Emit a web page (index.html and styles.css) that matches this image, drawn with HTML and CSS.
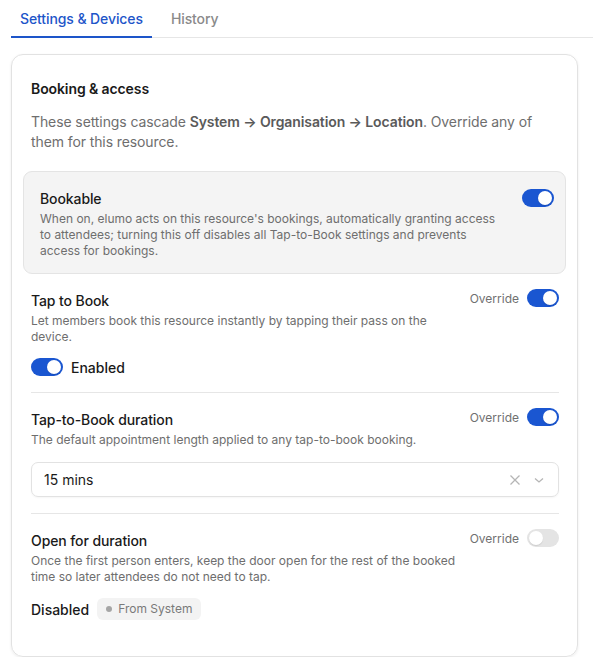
FILE: index.html
```html
<!DOCTYPE html>
<html lang="en">
<head>
<meta charset="UTF-8">
<meta name="viewport" content="width=device-width, initial-scale=1.0">
<title>Resource settings</title>
<link rel="stylesheet" href="styles.css">
</head>
<body>
<div class="tabs">
    <div class="tab active">Settings &amp; Devices</div>
    <div class="tab">History</div>
</div>

<div class="card">
    <h2 class="card-title">Booking &amp; access</h2>
    <p class="card-intro">These settings cascade <b>System → Organisation → Location</b>. Override any of them for this resource.</p>

    <div class="bookable">
        <div class="setting-head">
            <div>
                <div class="setting-title">Bookable</div>
                <p class="setting-desc">When on, elumo acts on this resource's bookings, automatically granting access to attendees; turning this off disables all Tap-to-Book settings and prevents access for bookings.</p>
            </div>
            <span class="toggle on"></span>
        </div>
    </div>

    <div class="setting">
        <div class="setting-head">
            <div>
                <div class="setting-title">Tap to Book</div>
                <p class="setting-desc">Let members book this resource instantly by tapping their pass on the device.</p>
            </div>
            <div class="override">Override <span class="toggle on"></span></div>
        </div>
        <div class="value-row">
            <span class="toggle on"></span>
            <span class="value">Enabled</span>
        </div>
    </div>

    <div class="setting">
        <div class="setting-head">
            <div>
                <div class="setting-title">Tap-to-Book duration</div>
                <p class="setting-desc">The default appointment length applied to any tap-to-book booking.</p>
            </div>
            <div class="override">Override <span class="toggle on"></span></div>
        </div>
        <div class="select">
            <span>15 mins</span>
            <div class="select-icons">
                <svg width="14" height="14" viewBox="0 0 14 14"><path d="M2.5 2.5l9 9M11.5 2.5l-9 9" stroke="#b5b5b5" stroke-width="1.3" fill="none"/></svg>
                <svg width="14" height="14" viewBox="0 0 14 14"><path d="M3 5.5l4 3.5 4-3.5" stroke="#b5b5b5" stroke-width="1.3" fill="none"/></svg>
            </div>
        </div>
    </div>

    <div class="setting">
        <div class="setting-head">
            <div>
                <div class="setting-title">Open for duration</div>
                <p class="setting-desc">Once the first person enters, keep the door open for the rest of the booked time so later attendees do not need to tap.</p>
            </div>
            <div class="override">Override <span class="toggle"></span></div>
        </div>
        <div class="value-row">
            <span class="value">Disabled</span>
            <span class="source"><i class="dot"></i>From System</span>
        </div>
    </div>
</div>
</body>
</html>
```

FILE: styles.css
```css
* {
    box-sizing: border-box;
    margin: 0;
    padding: 0;
}

body {
    font-family: Inter, "Noto Sans", sans-serif;
    color: #1a1a1a;
    background: #fff;
    padding: 0 15px 0 11px;
}

.tabs {
    display: flex;
    gap: 10px;
    border-bottom: 1px solid #e6e6e6;
    margin-right: -15px;
    padding-top: 8px;
}

.tab {
    font-size: 14px;
    font-weight: 500;
    color: #8a8a8a;
    padding: 2px 9px 9px;
    margin-bottom: -1px;
    border-bottom: 2px solid transparent;
    line-height: 17px;
    letter-spacing: -0.1px;
}

.tab.active {
    color: #1d55c9;
    border-bottom-color: #1d55c9;
}

.card {
    margin-top: 16px;
    border: 1px solid #e2e2e2;
    border-radius: 12px;
    box-shadow: 0 1px 3px rgba(0, 0, 0, 0.08);
    padding: 25px 18px 36px 19px;
}

.card-title {
    font-size: 14px;
    font-weight: 600;
    line-height: 18px;
    letter-spacing: -0.1px;
}

.card-intro {
    margin-top: 14px;
    font-size: 14px;
    line-height: 20px;
    color: #6e6e6e;
    letter-spacing: -0.1px;
}

.card-intro b {
    font-weight: 600;
    color: #5a5a5a;
}

.bookable {
    margin: 19px -7px 0 -8px;
    background: #f4f4f4;
    border: 1px solid #e4e4e4;
    border-radius: 9px;
    padding: 17px 11px 14px 16px;
}

.bookable .setting-desc {
    max-width: 460px;
}

.setting {
    padding: 17px 0 16px;
    border-bottom: 1px solid #e6e6e6;
}

.setting:last-child {
    border-bottom: none;
    padding-bottom: 0;
}

.setting-head {
    display: flex;
    justify-content: space-between;
    align-items: flex-start;
    gap: 8px;
}

.setting-title {
    font-size: 14px;
    font-weight: 500;
    line-height: 20px;
    letter-spacing: -0.1px;
}

.setting-desc {
    margin-top: 2px;
    font-size: 12px;
    line-height: 16px;
    color: #6e6e6e;
    max-width: 428px;
}

.override {
    display: flex;
    align-items: center;
    gap: 8px;
    font-size: 12px;
    color: #707070;
    white-space: nowrap;
    margin-top: -2px;
}

.toggle {
    position: relative;
    display: inline-block;
    flex-shrink: 0;
    width: 32px;
    height: 18px;
    border-radius: 9px;
    background: #e4e4e4;
}

.toggle::after {
    content: "";
    position: absolute;
    top: 2px;
    left: 2px;
    width: 14px;
    height: 14px;
    border-radius: 50%;
    background: #fff;
    box-shadow: 0 1px 1px rgba(0, 0, 0, 0.1);
}

.toggle.on {
    background: #1a56d1;
}

.toggle.on::after {
    left: 16px;
}

.value-row {
    display: flex;
    align-items: center;
    gap: 8px;
    margin-top: 13px;
}

.value {
    font-size: 14px;
    font-weight: 500;
}

.source {
    display: inline-flex;
    align-items: center;
    gap: 6px;
    background: #f3f3f3;
    border-radius: 6px;
    padding: 3px 9px;
    font-size: 12px;
    line-height: 16px;
    color: #7a7a7a;
}

.dot {
    width: 6px;
    height: 6px;
    border-radius: 50%;
    background: #a5a5a5;
}

.select {
    margin-top: 14px;
    height: 35px;
    border: 1px solid #e2e2e2;
    border-radius: 7px;
    box-shadow: 0 1px 2px rgba(0, 0, 0, 0.04);
    display: flex;
    align-items: center;
    justify-content: space-between;
    padding: 0 12px;
    font-size: 14px;
}

.select-icons {
    display: flex;
    gap: 10px;
}
```
